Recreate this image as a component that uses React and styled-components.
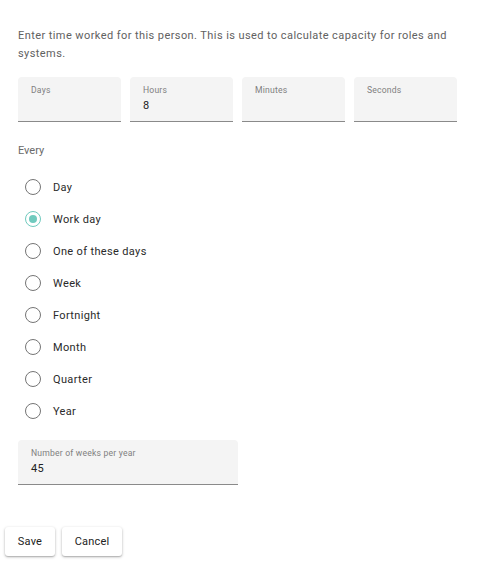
import React from "react";
import styled, { createGlobalStyle } from "styled-components";

const Global = createGlobalStyle`
  html, body { margin: 0; padding: 0; background: #fff; }
  body { font-family: Roboto, "Noto Sans", sans-serif; }
  * { box-sizing: border-box; }
`;

const Page = styled.div`
  width: 486px;
  height: 562px;
  background: #fff;
  display: flex;
  flex-direction: column;
  padding: 27px 0 0 0;
`;

const Content = styled.div`
  padding: 0 18px;
  display: flex;
  flex-direction: column;
`;

const Intro = styled.p`
  margin: 0;
  font-size: 11px;
  line-height: 18px;
  color: #616161;
  letter-spacing: 0.42px;
`;

const FieldRow = styled.div`
  display: flex;
  gap: 9px;
  margin-top: 14px;
  padding-right: 10px;
`;

const Field = styled.div`
  width: ${(p) => p.$w}px;
  height: 45px;
  background: #f4f4f4;
  border-radius: 4px 4px 0 0;
  border-bottom: 1px solid #8a8a8a;
  padding: 8px 13px 0;
  display: flex;
  flex-direction: column;
`;

const FieldLabel = styled.div`
  font-size: 8.6px;
  line-height: 10px;
  color: #808080;
  height: 10px;
  letter-spacing: 0.2px;
`;

const FieldValue = styled.div`
  font-size: 11px;
  line-height: 14px;
  color: #222;
  margin-top: 4px;
  letter-spacing: 0.3px;
`;

const Every = styled.div`
  font-size: 11px;
  line-height: 14px;
  color: #6a6a6a;
  margin-top: 22px;
`;

const RadioList = styled.div`
  display: flex;
  flex-direction: column;
  margin-top: 13px;
  padding-left: 7px;
`;

const RadioRow = styled.label`
  display: flex;
  align-items: center;
  height: 32px;
  gap: 12px;
`;

const Circle = styled.span`
  width: 16px;
  height: 16px;
  border-radius: 50%;
  border: 1.3px solid ${(p) => (p.$on ? "#70cabe" : "#757575")};
  display: flex;
  align-items: center;
  justify-content: center;
  &::after {
    content: "";
    width: 8px;
    height: 8px;
    border-radius: 50%;
    background: ${(p) => (p.$on ? "#70cabe" : "transparent")};
  }
`;

const RadioText = styled.span`
  font-size: 11px;
  color: #2a2a2a;
  letter-spacing: 0.35px;
`;

const WeeksWrap = styled.div`
  margin-top: 13px;
`;

const Actions = styled.div`
  display: flex;
  gap: 7px;
  padding: 0 5px;
  margin-top: 42px;
`;

const Button = styled.button`
  height: 29px;
  width: ${(p) => p.$w}px;
  border: none;
  background: #fff;
  border-radius: 3px;
  box-shadow: 0 1px 3px rgba(0, 0, 0, 0.28), 0 1px 1px rgba(0, 0, 0, 0.12);
  font-family: Roboto, sans-serif;
  font-size: 11px;
  color: #222;
  padding: 0;
  letter-spacing: 0.2px;
`;

const options = ["Day", "Work day", "One of these days", "Week", "Fortnight", "Month", "Quarter", "Year"];

export default function App() {
  return (
    <Page>
      <Global />
      <Content>
        <Intro>
          Enter time worked for this person. This is used to calculate capacity for roles and systems.
        </Intro>
        <FieldRow>
          <Field $w={103}><FieldLabel>Days</FieldLabel><FieldValue /></Field>
          <Field $w={103}><FieldLabel>Hours</FieldLabel><FieldValue>8</FieldValue></Field>
          <Field $w={103}><FieldLabel>Minutes</FieldLabel><FieldValue /></Field>
          <Field $w={103}><FieldLabel>Seconds</FieldLabel><FieldValue /></Field>
        </FieldRow>
        <Every>Every</Every>
        <RadioList>
          {options.map((o) => (
            <RadioRow key={o}>
              <Circle $on={o === "Work day"} />
              <RadioText>{o}</RadioText>
            </RadioRow>
          ))}
        </RadioList>
        <WeeksWrap>
          <Field $w={220}>
            <FieldLabel>Number of weeks per year</FieldLabel>
            <FieldValue>45</FieldValue>
          </Field>
        </WeeksWrap>
      </Content>
      <Actions>
        <Button $w={50}>Save</Button>
        <Button $w={60}>Cancel</Button>
      </Actions>
    </Page>
  );
}
